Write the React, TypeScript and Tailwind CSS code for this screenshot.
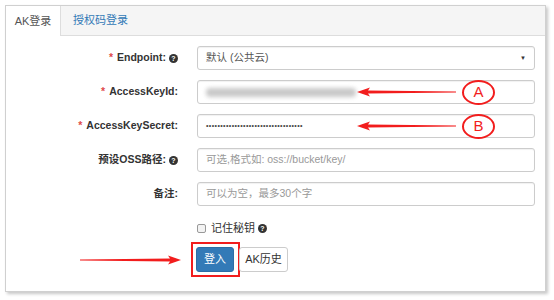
import React from "react";

const font = { fontFamily: '"Liberation Sans", "Noto Sans CJK SC", sans-serif' };

function Help() {
  return (
    <span className="inline-flex items-center justify-center w-[9px] h-[9px] rounded-full bg-[#333] text-white text-[7px] font-bold leading-none ml-[3px]">
      ?
    </span>
  );
}

function Row({
  label,
  required,
  help,
  children,
}: {
  label: string;
  required?: boolean;
  help?: boolean;
  children: React.ReactNode;
}) {
  return (
    <div className="flex items-center h-[24px]">
      <div className="w-[172px] flex items-center justify-end text-[10.5px] font-bold text-[#333]">
        {required && <span className="text-[#e04a4a] mr-[4px]">*</span>}
        {label}
        {help && <Help />}
      </div>
      <div className="ml-[19px] w-[338px] h-[24px]">{children}</div>
    </div>
  );
}

function Input({ children }: { children?: React.ReactNode }) {
  return (
    <div className="h-full w-full border border-[#ccc] rounded-[3px] flex items-center px-[8px] text-[10.5px] text-[#555] shadow-[inset_0_1px_1px_rgba(0,0,0,0.06)]">
      {children}
    </div>
  );
}

// tip at `tip`, tail at `tail`, works both ways
function Arrow({ tip, tail, y }: { tip: number; tail: number; y: number }) {
  const len = Math.abs(tail - tip);
  const left = Math.min(tip, tail);
  const flip = tip > tail;
  return (
    <svg
      className="absolute"
      style={{ left, top: y - 6, transform: flip ? "scaleX(-1)" : undefined }}
      width={len}
      height={12}
      viewBox={`0 0 ${len} 12`}
    >
      <polygon
        points={`0,6 13,1.5 11,4.6 ${len},5.6 ${len},6.4 11,7.4 13,10.5`}
        fill="#f21d1d"
      />
    </svg>
  );
}

function Circle({ cx, cy, letter }: { cx: number; cy: number; letter: string }) {
  return (
    <div
      className="absolute w-[33px] h-[25px] rounded-[50%] border-2 border-[#f21d1d] flex items-center justify-center text-[#f21d1d] text-[15px]"
      style={{ left: cx - 16, top: cy - 12 }}
    >
      {letter}
    </div>
  );
}

export default function App() {
  return (
    <div className="relative w-[554px] h-[300px] bg-white overflow-hidden" style={font}>
      <div className="absolute left-[5px] top-[5px] w-[541px] h-[287px] border border-[#d0d0d0] bg-white shadow-[2px_2px_3px_rgba(0,0,0,0.22)]">
        {/* tabs */}
        <div className="flex h-[30px] bg-[#f5f5f5] border-b border-[#ddd]">
          <div className="w-[55px] h-[30px] bg-white border-r border-[#ddd] flex items-center justify-center text-[11px] text-[#555]">
            AK登录
          </div>
          <div className="px-[12px] flex items-center text-[11px] text-[#337ab7]">授权码登录</div>
        </div>

        {/* form */}
        <div className="pt-[10px] flex flex-col gap-[10px]">
          <Row label="Endpoint:" required help>
            <Input>
              <span className="flex-1 text-[#555]">默认 (公共云)</span>
              <span className="text-[6px] text-[#333]">▼</span>
            </Input>
          </Row>
          <Row label="AccessKeyId:" required>
            <Input>
              <div className="w-[150px] h-[9px] rounded-[4px] bg-[#c9c9c9] blur-[2px]" />
            </Input>
          </Row>
          <Row label="AccessKeySecret:" required>
            <Input>
              <span className="text-[7px] tracking-[0.4px] text-[#444]">
                {"•".repeat(34)}
              </span>
            </Input>
          </Row>
          <Row label="预设OSS路径:" help>
            <Input>
              <span className="text-[#999]">可选,格式如: oss://bucket/key/</span>
            </Input>
          </Row>
          <Row label="备注:">
            <Input>
              <span className="text-[#999]">可以为空，最多30个字</span>
            </Input>
          </Row>
        </div>

        <div className="ml-[191px] mt-[14px] flex items-center text-[11px] text-[#333]">
          <span className="w-[9px] h-[9px] border border-[#999] rounded-[2px] bg-[#f3f3f3] mr-[5px]" />
          记住秘钥
          <Help />
        </div>

        <div className="ml-[185px] mt-[5px] flex items-center">
          <div className="border-2 border-[#f21d1d] p-[3px] pr-[4px]">
            <div className="w-[38px] h-[25px] rounded-[3px] bg-[#337ab7] border border-[#2e6da4] text-white text-[11px] flex items-center justify-center">
              登入
            </div>
          </div>
          <div className="-ml-[1px] w-[49px] h-[25px] rounded-[3px] border border-[#ccc] text-[#333] text-[11px] flex items-center justify-center">
            AK历史
          </div>
        </div>
      </div>

      {/* annotations */}
      <Arrow tip={357} tail={456} y={92} />
      <Circle cx={478} cy={92} letter="A" />
      <Arrow tip={357} tail={456} y={126} />
      <Circle cx={478} cy={126} letter="B" />
      <Arrow tip={181} tail={80} y={260} />
    </div>
  );
}
